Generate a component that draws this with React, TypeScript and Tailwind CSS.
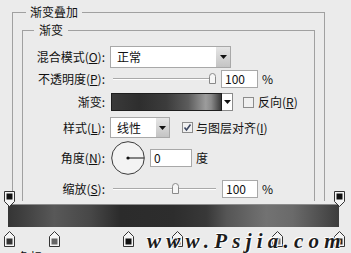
import React from 'react';

const Arrow = () => (
  <svg width="7" height="4" viewBox="0 0 7 4" className="block">
    <path d="M0 0 H7 L3.5 4 Z" fill="#111" />
  </svg>
);

const TopStop = ({ left }: { left: string }) => (
  <svg width="11" height="16" viewBox="0 0 11 16" className={`absolute top-[-13px] ${left}`}>
    <path d="M0.5 0.5 H10.5 V10.5 L5.5 15.5 L0.5 10.5 Z" fill="#f4f4f4" stroke="#333" />
    <rect x="2.5" y="2.5" width="6" height="6" fill="#111" />
  </svg>
);

const BottomStop = ({ left, color }: { left: string; color: string }) => (
  <svg width="11" height="16" viewBox="0 0 11 16" className={`absolute top-[27px] ${left}`}>
    <path d="M5.5 0.5 L10.5 5.5 V15.5 H0.5 V5.5 Z" fill="#f4f4f4" stroke="#333" />
    <rect x="2.5" y="7.5" width="6" height="6" fill={color} />
  </svg>
);

const Slider = ({ thumb }: { thumb: string }) => (
  <div className="relative ml-[8px] w-[103px] h-full flex items-center">
    <div className="w-full h-[2px] border-t border-[#a9a9a9] bg-white" />
    <div className={`absolute top-[3px] ${thumb} w-[7px] h-[11px] rounded-t-[4px] border border-[#8a8a8a] bg-[#f6f6f6]`} />
  </div>
);

export default function App() {
  return (
    <div className="relative w-[351px] h-[253px] overflow-hidden bg-[#ebebeb] pt-[5px] text-[12px] leading-[14px] text-[#111] font-['Noto_Sans_CJK_SC',sans-serif]">
      <fieldset className="ml-[12px] w-[313px] h-[196px] border border-b-0 border-[#a0a0a0]">
        <legend className="ml-[13px] px-[4px] leading-[14px]">渐变叠加</legend>
        <fieldset className="ml-[9px] mt-[4px] w-[293px] h-[178px] border border-b-0 border-[#a0a0a0]">
          <legend className="ml-[11px] px-[5px] leading-[14px]">渐变</legend>

          {/* blend mode */}
          <div className="mt-[9px] h-[22px] flex items-center">
            <div className="w-[82px] text-right shrink-0">
              混合模式(<span className="underline">O</span>):
            </div>
            <div className="ml-[5px] w-[121px] h-[22px] flex bg-white border border-[#a8a8a8]">
              <div className="flex-1 pl-[6px] flex items-center">正常</div>
              <div className="w-[14px] h-full flex items-center justify-center bg-gradient-to-b from-[#e6e6e6] to-[#c4c4c4]">
                <Arrow />
              </div>
            </div>
          </div>

          {/* opacity */}
          <div className="mt-[2px] h-[18px] flex items-center">
            <div className="w-[82px] text-right shrink-0">
              不透明度(<span className="underline">P</span>):
            </div>
            <Slider thumb="left-[96px]" />
            <div className="ml-[5px] w-[37px] h-[18px] pl-[3px] flex items-center bg-white border border-[#a8a8a8]">100</div>
            <div className="ml-[4px]">%</div>
          </div>

          {/* gradient */}
          <div className="mt-[5px] h-[18px] flex items-center">
            <div className="w-[82px] text-right shrink-0">渐变:</div>
            <div className="ml-[6px] w-[111px] h-[18px] border border-[#1e1e1e] bg-[linear-gradient(to_right,#3a3a3a_0%,#2e2e2e_25%,#3c3c3c_50%,#5c5c5c_70%,#9c9c9c_86%,#8a8a8a_91%,#3a3a3a_100%)]" />
            <div className="w-[11px] h-[18px] flex items-center justify-center bg-white border border-l-0 border-[#8a8a8a]">
              <Arrow />
            </div>
            <div className="ml-[10px] w-[11px] h-[11px] border border-[#8c8c8c] bg-[#f0f0f0]" />
            <div className="ml-[4px]">
              反向(<span className="underline">R</span>)
            </div>
          </div>

          {/* style */}
          <div className="mt-[6px] h-[21px] flex items-center">
            <div className="w-[82px] text-right shrink-0">
              样式(<span className="underline">L</span>):
            </div>
            <div className="ml-[5px] w-[60px] h-[21px] flex bg-white border border-[#a8a8a8]">
              <div className="flex-1 pl-[6px] flex items-center">线性</div>
              <div className="w-[13px] h-full flex items-center justify-center bg-gradient-to-b from-[#e6e6e6] to-[#c4c4c4]">
                <Arrow />
              </div>
            </div>
            <div className="ml-[12px] w-[11px] h-[11px] border border-[#8c8c8c] bg-[#f0f0f0] flex items-center justify-center">
              <svg width="9" height="9" viewBox="0 0 9 9">
                <path d="M1.5 4.5 L3.5 7 L7.5 1.5" fill="none" stroke="#3b4660" strokeWidth="1.6" />
              </svg>
            </div>
            <div className="ml-[3px]">
              与图层对齐(<span className="underline">I</span>)
            </div>
          </div>

          {/* angle */}
          <div className="mt-[3px] h-[34px] flex items-center">
            <div className="w-[82px] text-right shrink-0">
              角度(<span className="underline">N</span>):
            </div>
            <svg width="34" height="34" viewBox="0 0 34 34" className="ml-[6px] shrink-0">
              <circle cx="17" cy="17" r="16.3" fill="#f3f3f3" stroke="#3a3a3a" strokeWidth="1" />
              <line x1="17" y1="17" x2="33" y2="17" stroke="#111" strokeWidth="1" />
              <circle cx="17" cy="17" r="1.6" fill="#111" />
            </svg>
            <div className="ml-[5px] w-[42px] h-[18px] pl-[3px] flex items-center bg-white border border-[#a8a8a8]">0</div>
            <div className="ml-[4px]">度</div>
          </div>

          {/* scale */}
          <div className="mt-[5px] h-[18px] flex items-center">
            <div className="w-[82px] text-right shrink-0">
              缩放(<span className="underline">S</span>):
            </div>
            <Slider thumb="left-[59px]" />
            <div className="ml-[6px] w-[36px] h-[18px] pl-[3px] flex items-center bg-white border border-[#a8a8a8]">100</div>
            <div className="ml-[4px]">%</div>
          </div>
        </fieldset>
      </fieldset>

      {/* gradient editor */}
      <div className="relative h-[52px]">
        <div className="ml-[8px] mt-[3px] w-[331px] h-[23px] border-t border-[#8c8c8c] bg-[linear-gradient(to_right,#353535_0%,#3e3e3e_4%,#585858_14%,#474747_25%,#2b2b2b_34%,#2d2d2d_50%,#383838_60%,#555555_66%,#727272_78%,#6a6a6a_86%,#545454_93%,#3d3d3d_100%)]" />
        <TopStop left="left-[4px]" />
        <TopStop left="left-[334px]" />
        <BottomStop left="left-[4px]" color="#333" />
        <BottomStop left="left-[49px]" color="#666" />
        <BottomStop left="left-[123px]" color="#111" />
        <BottomStop left="left-[172px]" color="#333" />
        <BottomStop left="left-[272px]" color="#777" />
        <BottomStop left="left-[334px]" color="#222" />
        <div className="absolute left-[147px] top-[25px] text-[21px] leading-[24px] tracking-[5.2px] italic font-bold text-[#1c1c1c] font-['Liberation_Serif',serif] [text-shadow:1px_1px_0_#fff,-1px_-1px_0_#fff]">
          www.Psjia.com
        </div>
        <div className="absolute left-[18px] top-[46px]">色标</div>
      </div>
    </div>
  );
}
